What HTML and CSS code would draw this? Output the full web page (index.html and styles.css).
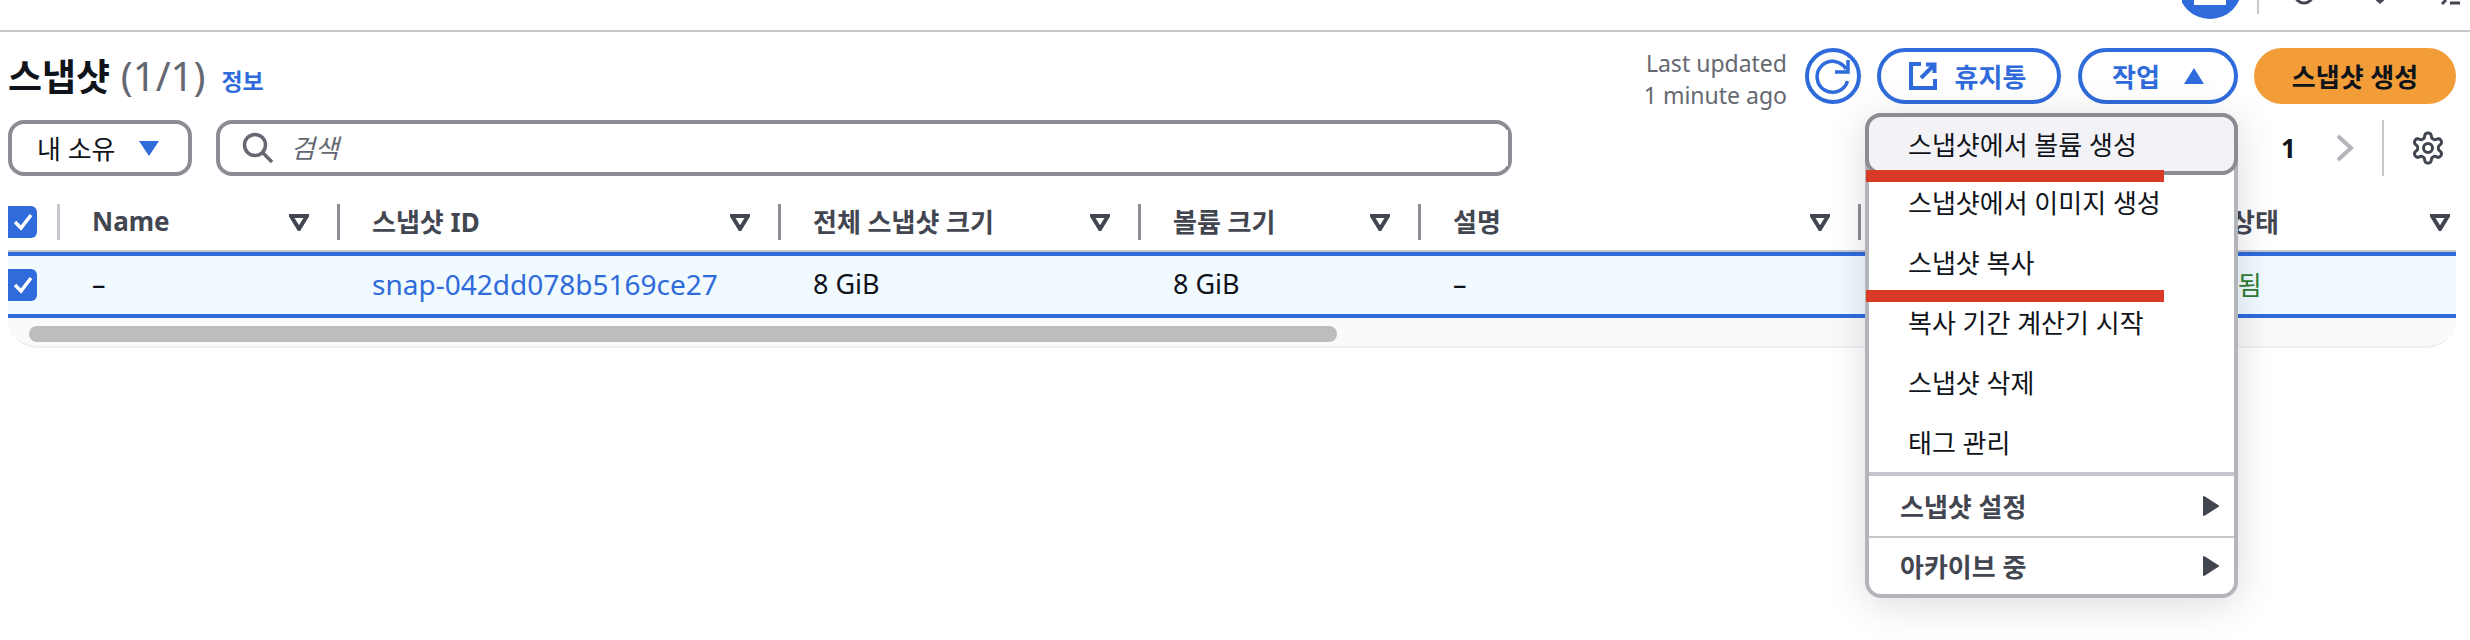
FILE: index.html
```html
<!DOCTYPE html>
<html lang="ko">
<head>
  <meta charset="UTF-8">
  <meta name="viewport" content="width=device-width, initial-scale=1.0">
  <title>스냅샷</title>
  <link rel="stylesheet" href="styles.css">
</head>
<body>
  <div class="topbar">
    <svg class="topbar-icons" width="288" height="30" viewBox="0 0 288 30">
      <circle cx="28" cy="-13" r="32" fill="#2f6bdb"/>
      <rect x="12" y="-4" width="32" height="9" fill="#fff"/>
      <rect x="75" y="0" width="2" height="14" fill="#c6c6cd"/>
      <circle cx="122" cy="-6" r="9" fill="none" stroke="#424650" stroke-width="3"/>
      <path d="M190 -3 L198 4 L206 -3 Z" fill="#424650"/>
      <path d="M260 4 L264 0 M268 3 H278" fill="none" stroke="#424650" stroke-width="3"/>
    </svg>
  </div>

  <div class="page">
    <div class="page-header">
      <div class="title">
        <h1>스냅샷 <span class="count">(1/1)</span></h1>
        <a href="#" class="info-link">정보</a>
      </div>

      <div class="actions">
        <div class="last-updated">Last updated<br>1 minute ago</div>
        <button class="btn btn-icon" aria-label="새로 고침">
          <svg width="48" height="48" viewBox="4 4 48 48" fill="none" stroke="#2f6bdb" stroke-width="3.5">
            <path d="M41 21 A15.5 15.5 0 1 0 42.5 33"/>
            <path d="M43 12 V24 H30"/>
          </svg>
        </button>
        <button class="btn btn-trash">
          <svg width="28" height="28" viewBox="0 0 28 28" fill="none" stroke="#2f6bdb" stroke-width="4">
            <path d="M12 2 H2 V26 H26 V17"/>
            <path d="M12 16 L25 3"/>
            <path d="M17 2.5 H25.500 V11"/>
          </svg>
          휴지통
        </button>
        <div class="dropdown">
          <button class="btn btn-actions">
            작업
            <svg class="caret" width="20" height="16" viewBox="0 0 20 16"><path d="M10 0 L20 16 H0 Z" fill="#2f6bdb"/></svg>
          </button>

          <div class="menu">
            <div class="menu-item menu-item-active">스냅샷에서 볼륨 생성</div>
            <div class="menu-item">스냅샷에서 이미지 생성</div>
            <div class="menu-item">스냅샷 복사</div>
            <div class="menu-item">복사 기간 계산기 시작</div>
            <div class="menu-item">스냅샷 삭제</div>
            <div class="menu-item">태그 관리</div>
            <div class="menu-section menu-section-first">
              스냅샷 설정
              <svg width="16" height="20" viewBox="0 0 16 20"><path d="M1 1 L15 10 L1 19 Z" fill="#424650" stroke="#424650" stroke-width="2" stroke-linejoin="round"/></svg>
            </div>
            <div class="menu-section">
              아카이브 중
              <svg width="16" height="20" viewBox="0 0 16 20"><path d="M1 1 L15 10 L1 19 Z" fill="#424650" stroke="#424650" stroke-width="2" stroke-linejoin="round"/></svg>
            </div>
            <div class="redline redline-one"></div>
            <div class="redline redline-two"></div>
          </div>
        </div>
        <button class="btn btn-primary">스냅샷 생성</button>
      </div>
    </div>

    <div class="toolbar">
      <div class="select">
        내 소유
        <svg width="20" height="15" viewBox="0 0 20 15"><path d="M0 0 H20 L10 15 Z" fill="#2f6bdb"/></svg>
      </div>
      <div class="search">
        <svg width="32" height="32" viewBox="0 0 32 32" fill="none" stroke="#656871" stroke-width="3.5">
          <circle cx="13" cy="13" r="10.500"/>
          <path d="M20.500 20.500 L30 30"/>
        </svg>
        <input type="text" placeholder="검색">
      </div>
      <div class="pagination">
        <svg class="chevron" width="18" height="28" viewBox="0 0 18 28"><path d="M16 2 L3 14 L16 26" /></svg>
        <span class="page-number">1</span>
        <svg class="chevron" width="18" height="28" viewBox="0 0 18 28"><path d="M2 2 L15 14 L2 26" /></svg>
        <span class="pagination-divider"></span>
        <svg class="gear" width="36" height="36" viewBox="0 0 24 24" fill="none" stroke="#424650" stroke-width="2">
          <path d="M12.220 2h-.44a2 2 0 0 0-2 2v.18a2 2 0 0 1-1 1.730l-.43.25a2 2 0 0 1-2 0l-.15-.08a2 2 0 0 0-2.730.73l-.22.38a2 2 0 0 0 .73 2.730l.15.1a2 2 0 0 1 1 1.720v.51a2 2 0 0 1-1 1.740l-.15.09a2 2 0 0 0-.73 2.730l.22.38a2 2 0 0 0 2.730.73l.15-.08a2 2 0 0 1 2 0l.43.25a2 2 0 0 1 1 1.730V20a2 2 0 0 0 2 2h.44a2 2 0 0 0 2-2v-.18a2 2 0 0 1 1-1.730l.43-.25a2 2 0 0 1 2 0l.15.08a2 2 0 0 0 2.730-.73l.22-.39a2 2 0 0 0-.73-2.730l-.15-.08a2 2 0 0 1-1-1.740v-.5a2 2 0 0 1 1-1.740l.15-.09a2 2 0 0 0 .73-2.730l-.22-.38a2 2 0 0 0-2.730-.73l-.15.08a2 2 0 0 1-2 0l-.43-.25a2 2 0 0 1-1-1.730V4a2 2 0 0 0-2-2z"/>
          <circle cx="12" cy="12" r="3"/>
        </svg>
      </div>
    </div>

    <div class="table">
      <div class="table-row table-head">
        <div class="cell cell-check">
          <span class="checkbox">
            <svg width="20" height="18" viewBox="0 0 20 18" fill="none" stroke="#fff" stroke-width="3.5"><path d="M2 9 L8 15 L18 2"/></svg>
          </span>
        </div>
        <div class="cell"><span class="head-label">Name</span> <svg class="sort" viewBox="0 0 20 17"><path d="M2 2 H18 L10 15 Z"/></svg></div>
        <div class="cell"><span class="head-label">스냅샷 ID</span> <svg class="sort" viewBox="0 0 20 17"><path d="M2 2 H18 L10 15 Z"/></svg></div>
        <div class="cell"><span class="head-label">전체 스냅샷 크기</span> <svg class="sort" viewBox="0 0 20 17"><path d="M2 2 H18 L10 15 Z"/></svg></div>
        <div class="cell"><span class="head-label">볼륨 크기</span> <svg class="sort" viewBox="0 0 20 17"><path d="M2 2 H18 L10 15 Z"/></svg></div>
        <div class="cell"><span class="head-label">설명</span> <svg class="sort" viewBox="0 0 20 17"><path d="M2 2 H18 L10 15 Z"/></svg></div>
        <div class="cell"></div>
        <div class="cell cell-status"><span class="head-label">상태</span> <svg class="sort" viewBox="0 0 20 17"><path d="M2 2 H18 L10 15 Z"/></svg></div>
      </div>

      <div class="table-row table-body">
        <div class="cell cell-check">
          <span class="checkbox">
            <svg width="20" height="18" viewBox="0 0 20 18" fill="none" stroke="#fff" stroke-width="3.5"><path d="M2 9 L8 15 L18 2"/></svg>
          </span>
        </div>
        <div class="cell cell-text">–</div>
        <div class="cell cell-text"><a href="#" class="snap-link">snap-042dd078b5169ce27</a></div>
        <div class="cell cell-text">8 GiB</div>
        <div class="cell cell-text">8 GiB</div>
        <div class="cell cell-text">–</div>
        <div class="cell"></div>
        <div class="cell cell-text cell-status status-ok">완료됨</div>
      </div>

      <div class="table-scroll">
        <div class="scroll-thumb"></div>
      </div>
    </div>
  </div>
</body>
</html>
```

FILE: styles.css
```css
body {
  font-family: "Noto Sans", "Noto Sans CJK KR", sans-serif;
  margin: 0;
  padding: 0;
  min-height: 640px;
  background-color: #fff;
  color: #0f141a;
  font-size: 26px;
}
.topbar {
  display: flex;
  justify-content: flex-end;
  height: 30px;
  border-bottom: 2px solid #c6c6cd;
}
.page {
  padding: 16px 14px 0 8px;
}
.page-header {
  display: flex;
  justify-content: space-between;
  height: 56px;
}
.title {
  display: flex;
  align-items: center;
  gap: 16px;
  padding-top: 0;
}
.title h1 {
  margin: 0;
  font-size: 37px;
  font-weight: 700;
  line-height: 48px;
  word-spacing: 1px;
}
.count {
  font-size: 40px;
  font-weight: 400;
  color: #656871;
}
.info-link {
  font-size: 23px;
  font-weight: 600;
  color: #2f6bdb;
  text-decoration: none;
  margin-top: 8px;
}
.actions {
  display: flex;
  align-items: center;
}
.last-updated {
  font-size: 23px;
  line-height: 32px;
  color: #656871;
  text-align: right;
  margin: 5px 18px 0 0;
}
.btn {
  display: flex;
  align-items: center;
  justify-content: center;
  box-sizing: border-box;
  height: 56px;
  padding: 0;
  border: 4px solid #2f6bdb;
  border-radius: 28px;
  background-color: #fff;
  color: #2f6bdb;
  font-family: inherit;
  font-size: 26px;
  font-weight: 700;
}
.btn-icon {
  width: 56px;
  margin-right: 16px;
}
.btn-trash {
  width: 184px;
  gap: 18px;
  margin-right: 17px;
  padding-right: 3px;
}
.btn-actions {
  width: 160px;
  gap: 24px;
}
.btn-primary {
  width: 202px;
  margin-left: 16px;
  border-color: #f29d38;
  background-color: #f29d38;
  color: #0f141a;
}
.dropdown {
  position: relative;
}
.menu {
  position: absolute;
  top: 65px;
  right: 0;
  width: 373px;
  box-sizing: border-box;
  border: 4px solid #b4b4bb;
  border-radius: 16px;
  background-color: #fff;
  box-shadow: 0 6px 40px rgba(0, 0, 40, 0.14);
  z-index: 5;
}
.menu-item {
  height: 60px;
  padding-left: 39px;
  line-height: 60px;
}
.menu-item-active {
  box-sizing: border-box;
  height: 62px;
  margin: -4px -4px -2px;
  padding-left: 39px;
  border: 4px solid #8c8c94;
  border-radius: 16px;
  background-color: #f3f3f7;
  line-height: 56px;
}
.menu-section {
  display: flex;
  justify-content: space-between;
  align-items: center;
  height: 56px;
  padding: 0 15px 0 31px;
  border-top: 2px solid #c6c6cd;
  color: #424650;
  font-weight: 700;
}
.menu-section-first {
  height: 60px;
  margin-top: -1px;
  border-top-width: 4px;
}
.redline {
  position: absolute;
  left: -3px;
  width: 298px;
  height: 12px;
  background-color: #d83a26;
}
.redline-one {
  top: 53px;
}
.redline-two {
  top: 173px;
}
.toolbar {
  display: flex;
  align-items: center;
  height: 56px;
  margin-top: 16px;
}
.select {
  display: flex;
  align-items: center;
  gap: 23px;
  box-sizing: border-box;
  width: 184px;
  height: 56px;
  padding-left: 25px;
  border: 4px solid #8c8c94;
  border-radius: 16px;
  color: #0f141a;
}
.search {
  display: flex;
  align-items: center;
  gap: 17px;
  box-sizing: border-box;
  width: 1296px;
  height: 56px;
  margin-left: 24px;
  padding-left: 22px;
  border: 4px solid #8c8c94;
  border-radius: 16px;
}
.search input {
  flex: 1;
  border: none;
  outline: none;
  padding: 0;
  font-family: inherit;
  font-size: 26px;
  font-style: italic;
}
.search input::placeholder {
  color: #656871;
  opacity: 1;
}
.pagination {
  display: flex;
  align-items: center;
  margin-left: auto;
  height: 56px;
  padding-right: 10px;
}
.chevron {
  fill: none;
  stroke: #b4b4bb;
  stroke-width: 4;
}
.page-number {
  width: 14px;
  margin: 0 41px 0 46px;
  font-size: 26px;
  font-weight: 700;
}
.pagination-divider {
  width: 2px;
  height: 56px;
  margin: 0 26px 0 28px;
  background-color: #c6c6cd;
}
.table {
  margin-top: 28px;
}
.table-row {
  display: grid;
  grid-template-columns: 52px 280px 441px 360px 280px 440px 329px 266px;
}
.table-head {
  height: 46px;
  color: #424650;
  font-weight: 700;
  border-bottom: 2px solid #c6c6cd;
}
.table-head .cell {
  display: flex;
  justify-content: space-between;
  align-items: center;
  box-sizing: border-box;
  height: 36px;
  padding: 0 28px 0 32px;
  border-right: 3px solid #8c8c94;
}
.table-head .cell-check {
  padding: 0;
  justify-content: flex-start;
  border-right-color: #c6c6cd;
}
.table-head .cell-status {
  padding: 0 6px 0 41px;
  border-right: none;
}
.head-label {
  margin-top: -2px;
}
.table-body {
  box-sizing: border-box;
  height: 66px;
  align-items: center;
  border-top: 4px solid #2f6bdb;
  border-bottom: 4px solid #2f6bdb;
  background-color: #f1faff;
  font-size: 27px;
}
.table-body .cell {
  padding-left: 32px;
}
.table-body .cell-text {
  padding-bottom: 3px;
}
.table-body .cell-check {
  padding-left: 0;
  display: flex;
}
.table-body .cell-status {
  padding-left: 0;
}
.status-ok {
  font-size: 26px;
  color: #2e7d32;
}
.checkbox {
  display: flex;
  align-items: center;
  justify-content: center;
  width: 29px;
  height: 32px;
  border-radius: 0 6px 6px 0;
  background-color: #2f6bdb;
}
.snap-link {
  font-size: 28px;
  color: #2f6bdb;
  text-decoration: none;
}
.sort {
  width: 20px;
  height: 17px;
  fill: none;
  stroke: #424650;
  stroke-width: 4;
}
.table-scroll {
  box-sizing: border-box;
  height: 30px;
  padding: 8px 0 0 21px;
  border-bottom: 2px solid #f0f0f2;
  border-radius: 0 0 40px 40px;
  background-color: #fafafa;
}
.scroll-thumb {
  width: 1308px;
  height: 16px;
  border-radius: 8px;
  background-color: #bdbdbd;
}
```
